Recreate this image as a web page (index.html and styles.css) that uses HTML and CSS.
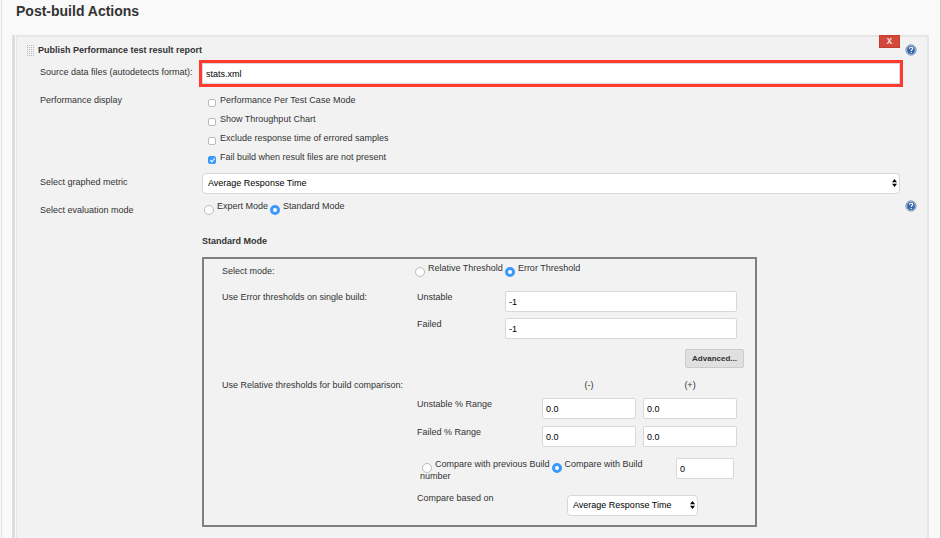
FILE: index.html
```html
<!DOCTYPE html>
<html lang="en">

<head>
    <meta charset="UTF-8">
    <meta name="viewport" content="width=device-width, initial-scale=1.0">
    <title>Post-build Actions</title>
    <link rel="stylesheet" href="styles.css">
</head>

<body>
    <svg class="defs" aria-hidden="true">
        <symbol id="arrows" viewBox="0 0 5 8">
            <path d="M0 3.2 2.5 0 5 3.2zM0 4.8h5L2.5 8z" />
        </symbol>
        <symbol id="help" viewBox="0 0 12 12">
            <circle cx="6" cy="6" r="5.1" fill="#c3d2e6" stroke="#7390bb" />
            <circle cx="6" cy="6" r="3.9" fill="#3564a4" />
            <path d="M4.5 4.8c0-2.1 3.2-2 3.2-.2 0 1.2-1.5 1.1-1.5 2.4M6.2 8.1v1" fill="none" stroke="#fff" stroke-width="1.2" />
        </symbol>
    </svg>

    <main class="page">
        <h1>Post-build Actions</h1>

        <form class="step-wrap">
            <section class="step">
                <button type="button" class="remove" aria-label="Delete step">X</button>

                <div class="step-head">
                    <span class="grip"></span>
                    <h2>Publish Performance test result report</h2>
                    <a href="#" class="help" aria-label="Help"><svg><use href="#help" /></svg></a>
                </div>

                <div class="row source">
                    <label class="name" for="source">Source data files (autodetects format):</label>
                    <input type="text" id="source" class="highlight" value="stats.xml">
                </div>

                <div class="row display">
                    <span class="name">Performance display</span>
                    <div class="checks">
                        <label><input type="checkbox"> Performance Per Test Case Mode</label>
                        <label><input type="checkbox"> Show Throughput Chart</label>
                        <label><input type="checkbox"> Exclude response time of errored samples</label>
                        <label><input type="checkbox" checked> Fail build when result files are not present</label>
                    </div>
                </div>

                <div class="row metric">
                    <label class="name" for="metric">Select graphed metric</label>
                    <div class="select">
                        <select id="metric">
                            <option>Average Response Time</option>
                        </select>
                        <svg><use href="#arrows" /></svg>
                    </div>
                </div>

                <div class="row evaluation">
                    <span class="name">Select evaluation mode</span>
                    <div class="radios"><label><input type="radio" name="evaluation">Expert Mode</label><label><input type="radio" name="evaluation" checked>Standard Mode</label></div>
                    <a href="#" class="help" aria-label="Help"><svg><use href="#help" /></svg></a>
                </div>

                <div class="standard">
                    <h3>Standard Mode</h3>

                    <div class="panel">
                        <div class="line mode">
                            <span>Select mode:</span>
                            <div class="radios"><label><input type="radio" name="mode">Relative Threshold</label><label><input type="radio" name="mode" checked>Error Threshold</label></div>
                        </div>

                        <div class="line single">
                            <span>Use Error thresholds on single build:</span>
                            <div class="fields">
                                <label for="unstable">Unstable</label>
                                <input type="text" id="unstable" value="-1">
                                <label for="failed">Failed</label>
                                <input type="text" id="failed" value="-1">
                            </div>
                        </div>

                        <button type="button" class="advanced">Advanced...</button>

                        <div class="line signs">
                            <span>Use Relative thresholds for build comparison:</span>
                            <div class="ranges">
                                <span></span>
                                <span class="sign">(-)</span>
                                <span class="sign">(+)</span>
                            </div>
                        </div>

                        <div class="line">
                            <div class="ranges values">
                                <label for="unstable-minus">Unstable % Range</label>
                                <input type="text" id="unstable-minus" value="0.0">
                                <input type="text" aria-label="Unstable % Range (+)" value="0.0">
                                <label for="failed-minus">Failed % Range</label>
                                <input type="text" id="failed-minus" value="0.0">
                                <input type="text" aria-label="Failed % Range (+)" value="0.0">
                            </div>
                        </div>

                        <div class="line">
                            <div class="compare">
                                <div class="radios"><label><input type="radio" name="compare">Compare with previous Build</label><label><input type="radio" name="compare" checked>Compare with Build number</label></div>
                                <input type="text" aria-label="Build number" value="0">
                            </div>
                        </div>

                        <div class="line">
                            <div class="based">
                                <label for="based">Compare based on</label>
                                <div class="select">
                                    <select id="based">
                                        <option>Average Response Time</option>
                                    </select>
                                    <svg><use href="#arrows" /></svg>
                                </div>
                            </div>
                        </div>
                    </div>
                </div>
            </section>
        </form>
    </main>
</body>

</html>
```
FILE: styles.css
```css
*,
*::before,
*::after {
    box-sizing: border-box;
    margin: 0;
    padding: 0;
}

:root {
    --page: #f9f9f9;
    --step: #f2f2f2;
    --line: #d8d8d8;
    --text: #333;
    --blue: #3b99fc;
    --red: #ff3b30;
}

body {
    font-family: "Liberation Sans", Arial, Helvetica, sans-serif;
    font-size: 9px;
    line-height: 12px;
    color: var(--text);
    background: var(--page);
}

.defs {
    display: none;
}

.page {
    min-height: 100vh;
    margin-left: 1px;
    padding: 3px 11px 0 10px;
    border-left: 1px solid #e0e0e0;
    border-right: 1px solid #c8c8c8;
}

h1 {
    margin: 0 0 16px 4px;
    font-size: 14px;
    line-height: 16px;
}

h2,
h3 {
    font-size: 9px;
}

.step-wrap {
    padding-left: 1px;
    border-left: 3px solid #dedede;
}

.step {
    position: relative;
    padding: 6px 0 11px 9px;
    border: 1px solid #e6e6e6;
    border-width: 2px 2px 0 1px;
    background: var(--step);
}

.remove {
    position: absolute;
    top: -2px;
    right: 27px;
    width: 21px;
    height: 13px;
    border: 1px solid #c43c30;
    background: #d2483b;
    color: #fbe3e0;
    font: bold 9px/10px "Liberation Mono", monospace;
}

.step-head {
    display: flex;
    align-items: center;
    height: 14px;
}

.grip {
    width: 8px;
    height: 12px;
    margin-right: 4px;
    background:
        linear-gradient(var(--step) 1px, transparent 1px) 0 0 / 2px 2px,
        linear-gradient(90deg, var(--step) 1px, #b8b8b8 1px) 0 0 / 2px 2px;
}

.help {
    width: 12px;
    height: 12px;
    margin: 0 10px 0 auto;
}

.help svg {
    display: block;
    width: 12px;
    height: 12px;
}

.row {
    display: grid;
    grid-template-columns: 162px minmax(0, 1fr) 27px;
    align-items: start;
    padding-left: 14px;
}

.name {
    padding-top: 3px;
    white-space: nowrap;
}

.source {
    padding-top: 6px;
}

.display {
    padding-top: 10px;
}

.display .name {
    padding-top: 0;
}

.metric {
    padding-top: 3px;
}

.evaluation {
    padding-top: 6px;
}

.evaluation .name {
    padding-top: 4px;
}

input[type="text"],
select {
    display: block;
    width: 100%;
    height: 21px;
    padding: 0 3px;
    border: 1px solid var(--line);
    border-radius: 2px;
    background: #fff;
    color: #000;
    font: inherit;
}

input.highlight {
    border-radius: 0;
    outline: 3px solid var(--red);
    outline-offset: 0;
}

select {
    appearance: none;
    padding: 0 5px 1px;
    border-radius: 4px;
}

.select {
    position: relative;
}

.select svg {
    position: absolute;
    top: 6px;
    right: 3px;
    width: 5px;
    height: 8px;
    pointer-events: none;
}

input[type="checkbox"],
input[type="radio"] {
    appearance: none;
    border: 1px solid #bbb;
    background: #fff;
}

input[type="checkbox"] {
    width: 8px;
    height: 8px;
    margin: 5px 4px 0 0;
    border-radius: 2px;
}

input[type="radio"] {
    width: 10px;
    height: 10px;
    margin: 0 3px -3px 2px;
    border-radius: 50%;
    vertical-align: -3px;
}

input[type="checkbox"]:checked {
    border-color: var(--blue);
    background: var(--blue);
}

input[type="checkbox"]:checked::before {
    content: "";
    display: block;
    width: 3px;
    height: 5px;
    margin-left: 2px;
    border: solid #fff;
    border-width: 0 1px 1px 0;
    transform: rotate(40deg);
}

input[type="radio"]:checked {
    border: 3px solid var(--blue);
}

.checks label {
    display: flex;
    align-items: flex-start;
    width: fit-content;
    height: 19px;
    padding-left: 6px;
}

.standard {
    padding: 19px 27px 0 176px;
}

.panel {
    max-width: 555px;
    margin-top: 10px;
    padding: 3px 18px 9px;
    border: 2px solid #808080;
}

.line {
    display: grid;
    grid-template-columns: 195px minmax(0, 1fr);
    align-items: start;
}

.line > :only-child {
    grid-column: 2;
}

.mode > span {
    padding-top: 3px;
}

.mode {
    height: 29px;
}

.mode .radios {
    margin-left: -4px;
}

.fields {
    display: grid;
    grid-template-columns: 88px 1fr;
    row-gap: 6px;
}

.advanced {
    display: block;
    height: 19px;
    margin: 10px -7px 11px auto;
    padding: 0 6px;
    border: 1px solid #ccc;
    border-radius: 2px;
    background: #e0e0e0;
    color: var(--text);
    font: bold 8px/12px "Liberation Sans", Arial, sans-serif;
}

.ranges {
    display: grid;
    grid-template-columns: 118px 1fr 1fr;
    gap: 7px;
}

.values {
    margin-top: 7px;
}

.sign {
    text-align: center;
}

.compare {
    display: grid;
    grid-template-columns: 1fr 58px;
    gap: 16px;
    margin: 11px 3px 0;
}

.based {
    display: grid;
    grid-template-columns: 150px 131px;
    margin-top: 10px;
}

.based .select {
    margin-top: 3px;
}
```
